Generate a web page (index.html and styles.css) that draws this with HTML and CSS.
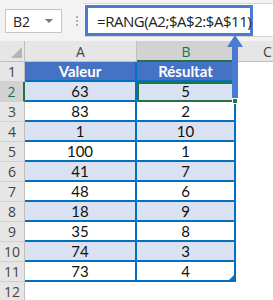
FILE: index.html
```html
<!DOCTYPE html>
<html>
<head>
<meta charset="utf-8">
<link rel="stylesheet" href="styles.css">
</head>
<body>
<div class="app">
  <div class="toolbar">
    <div class="namebox"><span class="name">B2</span><span class="caret"></span></div>
    <div class="dots"><i></i><i></i><i></i></div>
    <div class="fbar"><div class="formula">=RANG(A2;$A$2:$A$11)</div></div>
  </div>
  <div class="sheet">
    <div class="corner"><span class="tri"></span></div>
    <div class="colh">A</div>
    <div class="colh sel">B</div>
    <div class="colh last">C</div>

    <div class="rowh">1</div><div class="c hd">Valeur</div><div class="c hd rb">Résultat</div><div class="e"></div>
    <div class="rowh sel">2</div><div class="c band">63</div><div class="c band rb active">5<span class="handle"></span></div><div class="e"></div>
    <div class="rowh">3</div><div class="c">83</div><div class="c rb">2</div><div class="e"></div>
    <div class="rowh">4</div><div class="c band">1</div><div class="c band rb">10</div><div class="e"></div>
    <div class="rowh">5</div><div class="c">100</div><div class="c rb">1</div><div class="e"></div>
    <div class="rowh">6</div><div class="c band">41</div><div class="c band rb">7</div><div class="e"></div>
    <div class="rowh">7</div><div class="c">48</div><div class="c rb">6</div><div class="e"></div>
    <div class="rowh">8</div><div class="c band">18</div><div class="c band rb">9</div><div class="e"></div>
    <div class="rowh">9</div><div class="c">35</div><div class="c rb">8</div><div class="e"></div>
    <div class="rowh">10</div><div class="c band">74</div><div class="c band rb">3</div><div class="e"></div>
    <div class="rowh">11</div><div class="c bb">73</div><div class="c rb bb">4<span class="resize"></span></div><div class="e"></div>
    <div class="rowh">12</div><div class="e"></div><div class="e"></div><div class="e"></div>
  </div>
  <svg class="arrow" width="18" height="66" viewBox="0 0 18 66">
    <polygon points="9,0 17,12 12,12 12,66 6,66 6,12 1,12" fill="#4a7bd0"/>
  </svg>
</div>
</body>
</html>
```
FILE: styles.css
```css
* { box-sizing: border-box; }
body { margin: 0; background: #fff; font-family: "Lato", "Liberation Sans", sans-serif; }
.app { position: relative; width: 273px; height: 300px; overflow: hidden; }

.toolbar {
  height: 41px;
  background: #f3f3f3;
  display: flex;
  align-items: flex-start;
  padding-top: 3px;
}
.namebox {
  margin-left: 5px;
  margin-top: 6px;
  width: 57px;
  height: 24px;
  background: #fff;
  border: 1px solid #c6c6c6;
  display: flex;
  align-items: center;
  justify-content: space-between;
  padding: 0 8px 0 7px;
}
.name { font-family: "Open Sans", "Liberation Sans", sans-serif; font-size: 14px; color: #222; }
.caret {
  width: 0; height: 0;
  border-left: 4px solid transparent;
  border-right: 4px solid transparent;
  border-top: 4px solid #777;
}
.dots {
  margin-left: 14px;
  margin-top: 13px;
  display: flex;
  flex-direction: column;
  gap: 2px;
}
.dots i { display: block; width: 2px; height: 2px; background: #b0b0b0; }
.fbar {
  margin-left: 6px;
  flex: 1;
  height: 34px;
  background: #fff;
  border-top: 1px solid #d4d4d4;
  border-bottom: 1px solid #d4d4d4;
  padding-left: 1px;
  padding-top: 1px;
}
.formula {
  width: 168px;
  height: 31px;
  border: 3px solid #4a7bd0;
  font-family: "Open Sans", "Liberation Sans", sans-serif;
  font-size: 15px;
  color: #222;
  display: flex;
  align-items: center;
  padding-left: 9px;
  letter-spacing: -0.45px;
}

.sheet {
  display: grid;
  grid-template-columns: 25px 112px 99px 1fr;
  grid-template-rows: 21px repeat(12, 20px);
}
.corner {
  background: #e6e6e6;
  border-right: 1px solid #bfbfbf;
  border-bottom: 1px solid #bfbfbf;
  position: relative;
}
.tri {
  position: absolute;
  right: 2px; bottom: 3px;
  width: 0; height: 0;
  border-left: 11px solid transparent;
  border-bottom: 11px solid #b5b5b5;
}
.colh {
  background: #e6e6e6;
  border-right: 1px solid #bfbfbf;
  border-bottom: 1px solid #bfbfbf;
  font-family: "Open Sans", "Liberation Sans", sans-serif;
  font-size: 14px;
  color: #444;
  display: flex; align-items: center; justify-content: center;
  padding-top: 1px;
}
.colh.sel { background: #d2d2d2; color: #217346; border-bottom: 2px solid #217346; }
.colh.last { border-right: none; justify-content: flex-start; padding-left: 27px; }
.rowh {
  background: #e6e6e6;
  border-right: 1px solid #bfbfbf;
  border-bottom: 1px solid #d0d0d0;
  font-family: "Open Sans", "Liberation Sans", sans-serif;
  font-size: 14px;
  color: #444;
  display: flex; align-items: center; justify-content: center;
}
.rowh.sel { background: #d2d2d2; color: #217346; border-right: 2px solid #217346; }

.c {
  position: relative;
  border-right: 2px solid #0070c0;
  border-bottom: 2px solid #0070c0;
  font-size: 15px;
  color: #111;
  display: flex; align-items: center; justify-content: center;
}
.c.band { background: #d9e1f2; }
.c.hd { background: #4472c4; color: #fff; font-weight: bold; border-bottom: 2px solid #0070c0; }
.e { background: #fff; }
.c.active { outline: 2px solid #217346; outline-offset: -2px; }
.handle {
  position: absolute;
  right: -4px; bottom: -4px;
  width: 6px; height: 6px;
  background: #217346;
  border: 1px solid #fff;
  z-index: 2;
}
.resize {
  position: absolute;
  right: 0; bottom: 0;
  width: 0; height: 0;
  border-left: 5px solid transparent;
  border-bottom: 5px solid #3a5fcf;
}
.arrow { position: absolute; left: 226px; top: 35px; }
```
